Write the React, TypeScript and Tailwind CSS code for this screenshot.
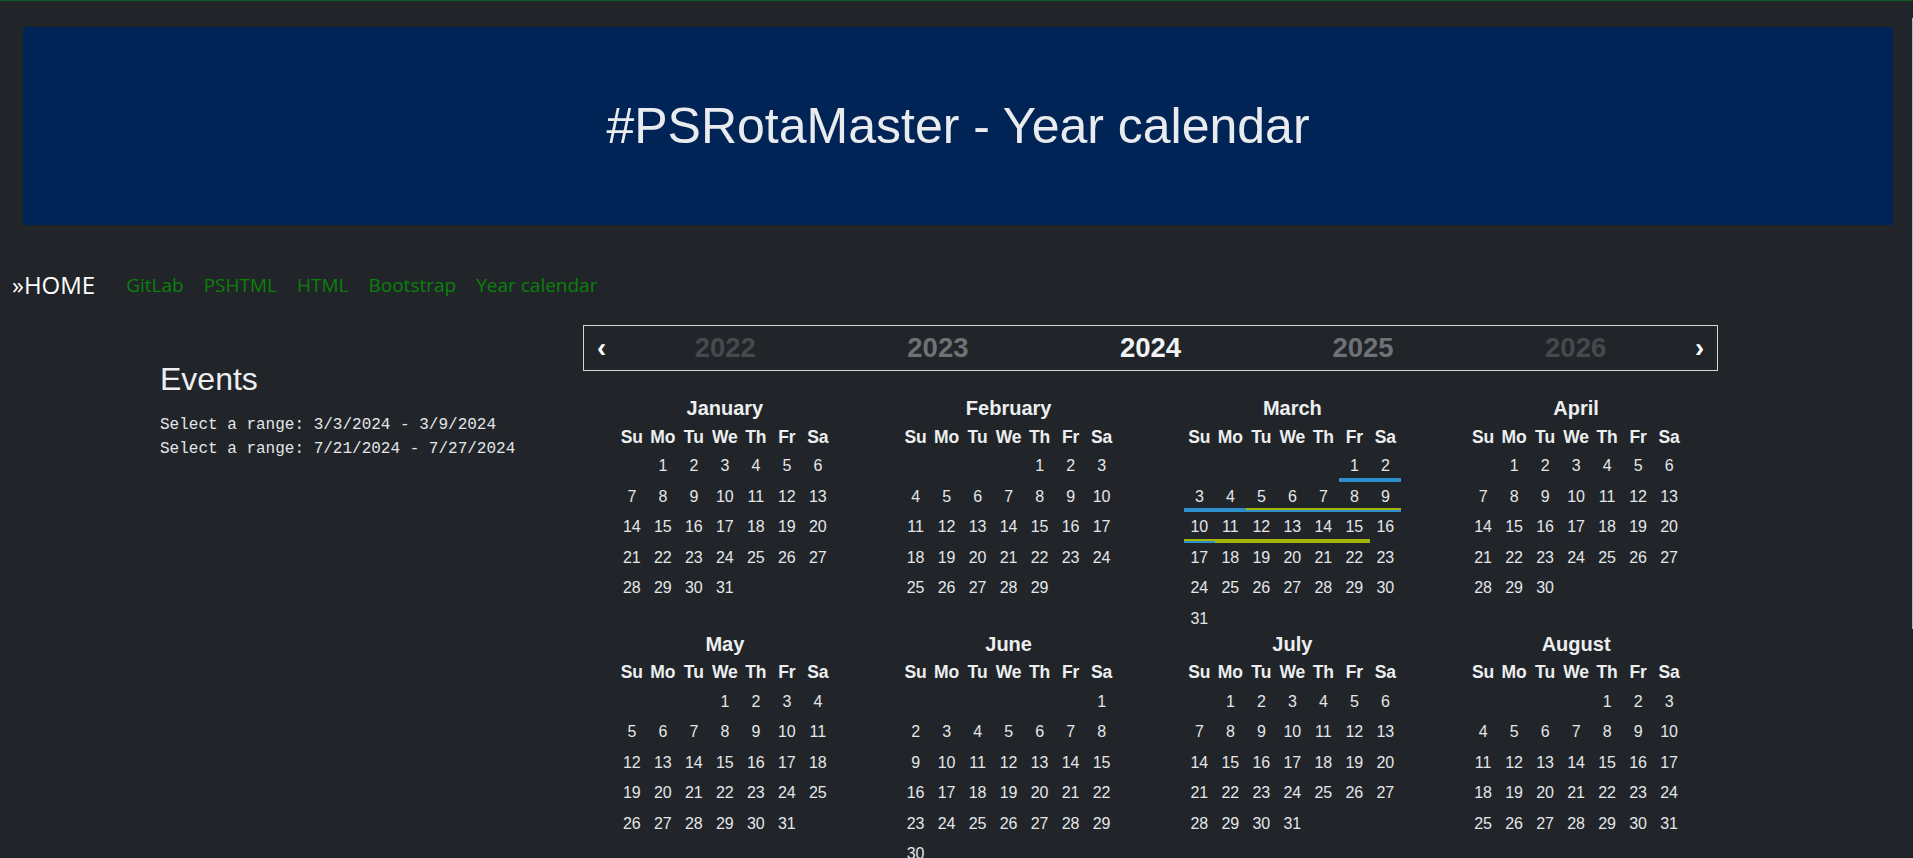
import React from "react";

const MONTHS = [
  "January",
  "February",
  "March",
  "April",
  "May",
  "June",
  "July",
  "August",
  "September",
  "October",
  "November",
  "December",
];
const DAYS = ["Su", "Mo", "Tu", "We", "Th", "Fr", "Sa"];

const BLUE = "shadow-[inset_0_-4px_0_0_#2d8fcc]";
const GREEN = "shadow-[inset_0_-4px_0_0_#a2b609]";
const BOTH = "shadow-[inset_0_-2px_0_0_#2d8fcc,inset_0_-4px_0_0_#a2b609]";

function eventClass(m: number, d: number): string {
  if (m !== 2) return "";
  const a = d >= 1 && d <= 10;
  const b = d >= 5 && d <= 15;
  if (a && b) return BOTH;
  if (a) return BLUE;
  if (b) return GREEN;
  return "";
}

function Month({ index }: { index: number }) {
  const year = 2024;
  const first = new Date(year, index, 1).getDay();
  const count = new Date(year, index + 1, 0).getDate();
  const cells: (number | null)[] = [];
  for (let i = 0; i < first; i++) cells.push(null);
  for (let d = 1; d <= count; d++) cells.push(d);
  while (cells.length % 7 !== 0) cells.push(null);

  return (
    <div className="h-[235.5px] flex flex-col items-center">
      <div className="h-[30px] leading-[30px] text-[20px] font-bold text-[#eceef0]">
        {MONTHS[index]}
      </div>
      <div className="grid grid-cols-[repeat(7,31px)]">
        {DAYS.map((d) => (
          <div
            key={d}
            className="h-[28px] flex items-center justify-center text-[17.5px] font-bold text-[#eceef0]"
          >
            {d}
          </div>
        ))}
        {cells.map((d, i) => (
          <div
            key={i}
            className={
              "h-[30.5px] flex items-center justify-center text-[16px] text-[#e4e6e9] " +
              (d ? eventClass(index, d) : "")
            }
          >
            {d ?? ""}
          </div>
        ))}
      </div>
    </div>
  );
}

export default function App() {
  return (
    <div className="relative min-h-screen bg-[#212529] border-t border-[#0e5a22] font-['Liberation_Sans',Arial,sans-serif] text-[#dee2e6]">
      <div className="absolute right-0 top-[17px] h-[611px] w-px bg-[#b8b8b8]" />
      <header className="ml-[23px] mr-[20px] mt-[26px] h-[198px] bg-[#002456] flex items-center justify-center">
        <h1 className="text-[50px] leading-none text-[#e9ebee]">
          #PSRotaMaster - Year calendar
        </h1>
      </header>

      <nav className="mt-[42px] h-[36px] flex items-center pl-[12px] font-['Open_Sans','Noto_Sans',sans-serif]">
        <span className="text-[24px] leading-[36px] text-white">»HOME</span>
        <div className="ml-[31px] flex items-center gap-[20px] text-[19px] text-[#0a800a]">
          <a>GitLab</a>
          <a>PSHTML</a>
          <a>HTML</a>
          <a>Bootstrap</a>
          <a>Year calendar</a>
        </div>
      </nav>

      <main className="mt-[22px] flex">
        <section className="w-[583px] shrink-0 pl-[160px] pt-[35px]">
          <h2 className="text-[32px] leading-[38px] text-[#eceef0]">Events</h2>
          <div className="mt-[15px] font-['Liberation_Mono',monospace] text-[16px] leading-[24px] text-[#e4e6e9]">
            <div>Select a range: 3/3/2024 - 3/9/2024</div>
            <div>Select a range: 7/21/2024 - 7/27/2024</div>
          </div>
        </section>

        <section className="w-[1135px] shrink-0">
          <div className="h-[46px] border border-[#d6d6d6] flex items-center font-bold">
            <div className="w-[35px] text-center text-[27.5px] text-white">‹</div>
            <div className="flex-1 text-center text-[27.5px] text-[#46494e]">2022</div>
            <div className="flex-1 text-center text-[27.5px] text-[#6e7176]">2023</div>
            <div className="flex-1 text-center text-[27.5px] text-[#f2f3f5]">2024</div>
            <div className="flex-1 text-center text-[27.5px] text-[#6e7176]">2025</div>
            <div className="flex-1 text-center text-[27.5px] text-[#46494e]">2026</div>
            <div className="w-[35px] text-center text-[27.5px] text-white">›</div>
          </div>
          <div className="mt-[22px] grid grid-cols-4">
            {MONTHS.map((_, i) => (
              <Month key={i} index={i} />
            ))}
          </div>
        </section>
      </main>
    </div>
  );
}
